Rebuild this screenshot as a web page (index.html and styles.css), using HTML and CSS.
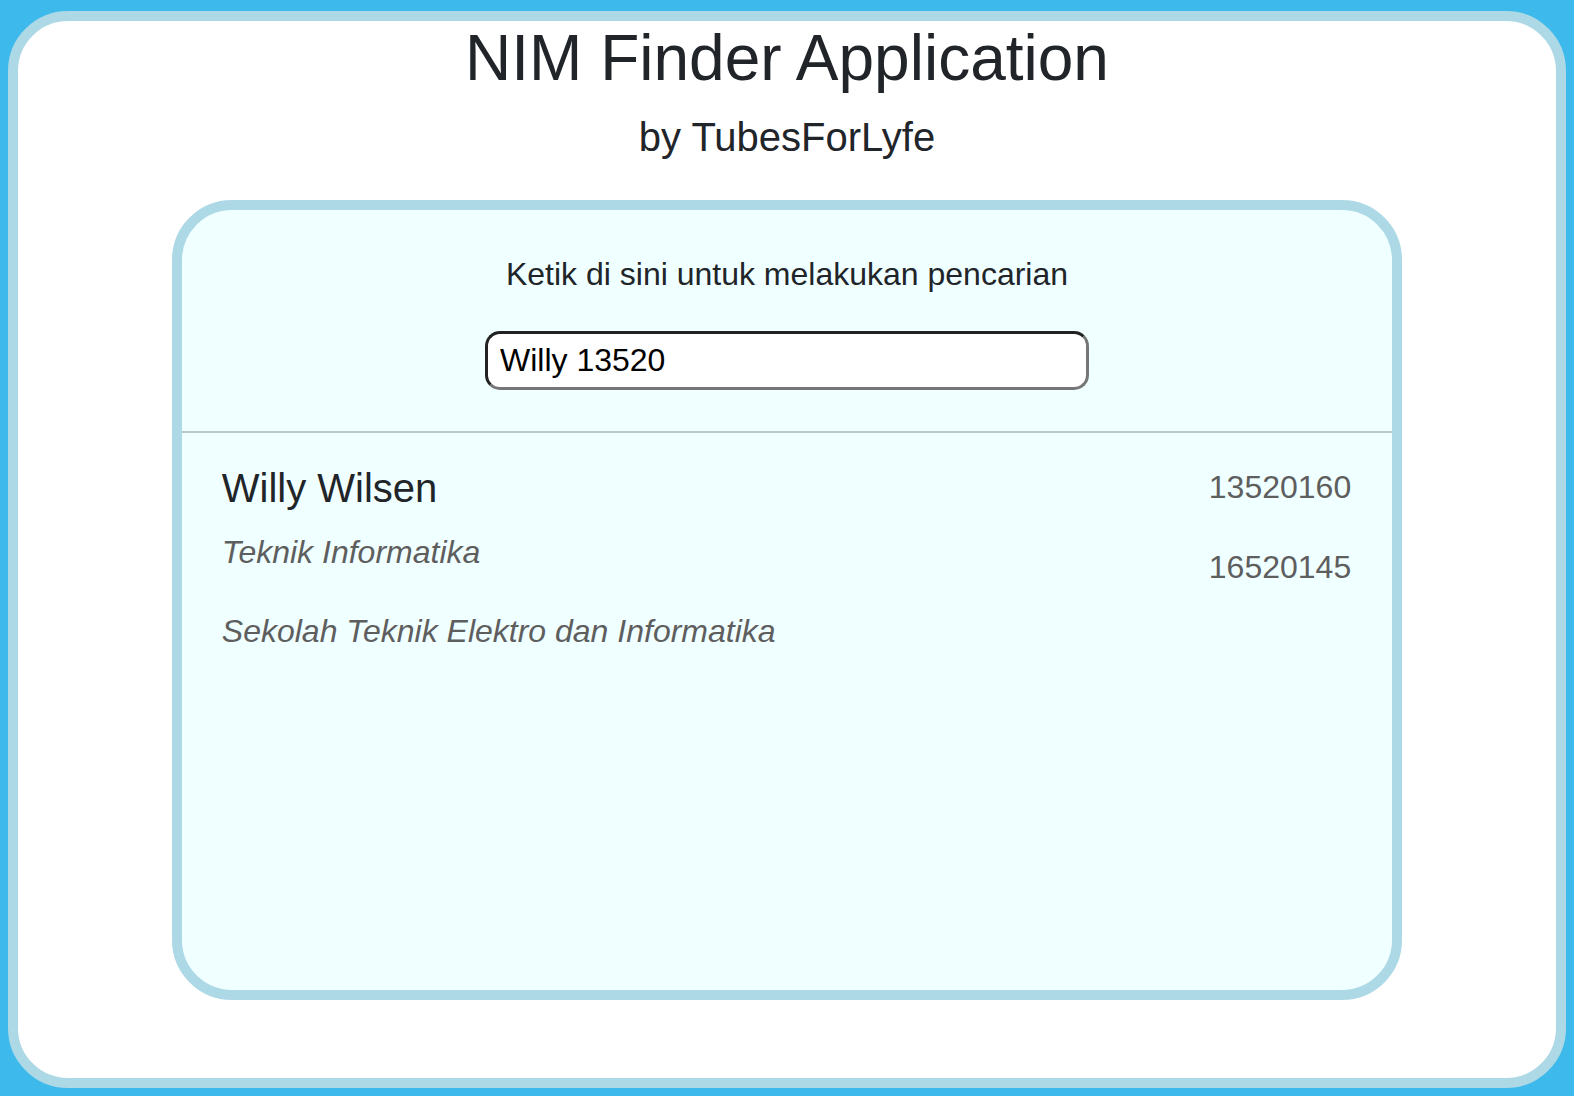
FILE: index.html
```html
<!DOCTYPE html>
<html lang="id">
<head>
<meta charset="utf-8">
<title>NIM Finder Application</title>
<link rel="stylesheet" href="styles.css">
</head>
<body>
<div class="frame">
  <h1 class="title">NIM Finder Application</h1>
  <h2 class="subtitle">by TubesForLyfe</h2>
  <div class="card">
    <div class="search">
      <p class="prompt">Ketik di sini untuk melakukan pencarian</p>
      <input class="search-input" type="text" value="Willy 13520">
    </div>
    <div class="results">
      <div class="result">
        <div class="info">
          <div class="name">Willy Wilsen</div>
          <div class="major">Teknik Informatika</div>
          <div class="faculty">Sekolah Teknik Elektro dan Informatika</div>
        </div>
        <div class="nims">
          <div class="nim">13520160</div>
          <div class="nim">16520145</div>
        </div>
      </div>
    </div>
  </div>
</div>
</body>
</html>
```

FILE: styles.css
```css
html, body {
  margin: 0;
  padding: 0;
}
body {
  background: #3dbaeb;
  padding: 11px 8px 8px;
  font-family: "Liberation Sans", Arial, sans-serif;
  color: #212529;
}
.frame {
  box-sizing: border-box;
  height: 1077px;
  background: #ffffff;
  border: 10px solid #add8e6;
  border-radius: 60px;
  text-align: center;
}
.title {
  margin: 1px 0 0;
  font-size: 64px;
  font-weight: 400;
  line-height: 1.15;
}
.subtitle {
  margin: 18px 0 0;
  font-size: 40px;
  font-weight: 400;
  line-height: 1.15;
}
.card {
  box-sizing: border-box;
  width: 80%;
  height: 800px;
  margin: 40px auto 0;
  background: #f0ffff;
  border: 10px solid #add8e6;
  border-radius: 60px;
}
.search {
  display: flex;
  flex-direction: column;
  align-items: center;
  padding: 46px 0 41px;
  border-bottom: 2px solid #b5caca;
}
.prompt {
  margin: 0 0 39px;
  font-size: 32px;
  line-height: 1.15;
}
.search-input {
  box-sizing: border-box;
  width: 604px;
  height: 59px;
  padding: 0 12px;
  margin: 0;
  font-family: "Liberation Sans", Arial, sans-serif;
  font-size: 32px;
  color: #000000;
  background: #ffffff;
  border: 3px solid;
  border-color: #222222 #767676 #767676 #222222;
  border-radius: 15px;
  outline: none;
}
.results {
  padding: 32px 41px 0 40px;
  text-align: left;
}
.result {
  display: flex;
  justify-content: space-between;
}
.info {
  display: flex;
  flex-direction: column;
}
.name {
  font-size: 40px;
  line-height: 1.15;
}
.major, .faculty {
  font-size: 32px;
  font-style: italic;
  line-height: 1.15;
  color: #5e5e5e;
}
.major {
  margin-top: 23px;
}
.faculty {
  margin-top: 42px;
}
.nims {
  display: flex;
  flex-direction: column;
  gap: 43px;
  padding-top: 4px;
  text-align: right;
}
.nim {
  font-size: 32px;
  line-height: 1.15;
  color: #5e5e5e;
}
```
